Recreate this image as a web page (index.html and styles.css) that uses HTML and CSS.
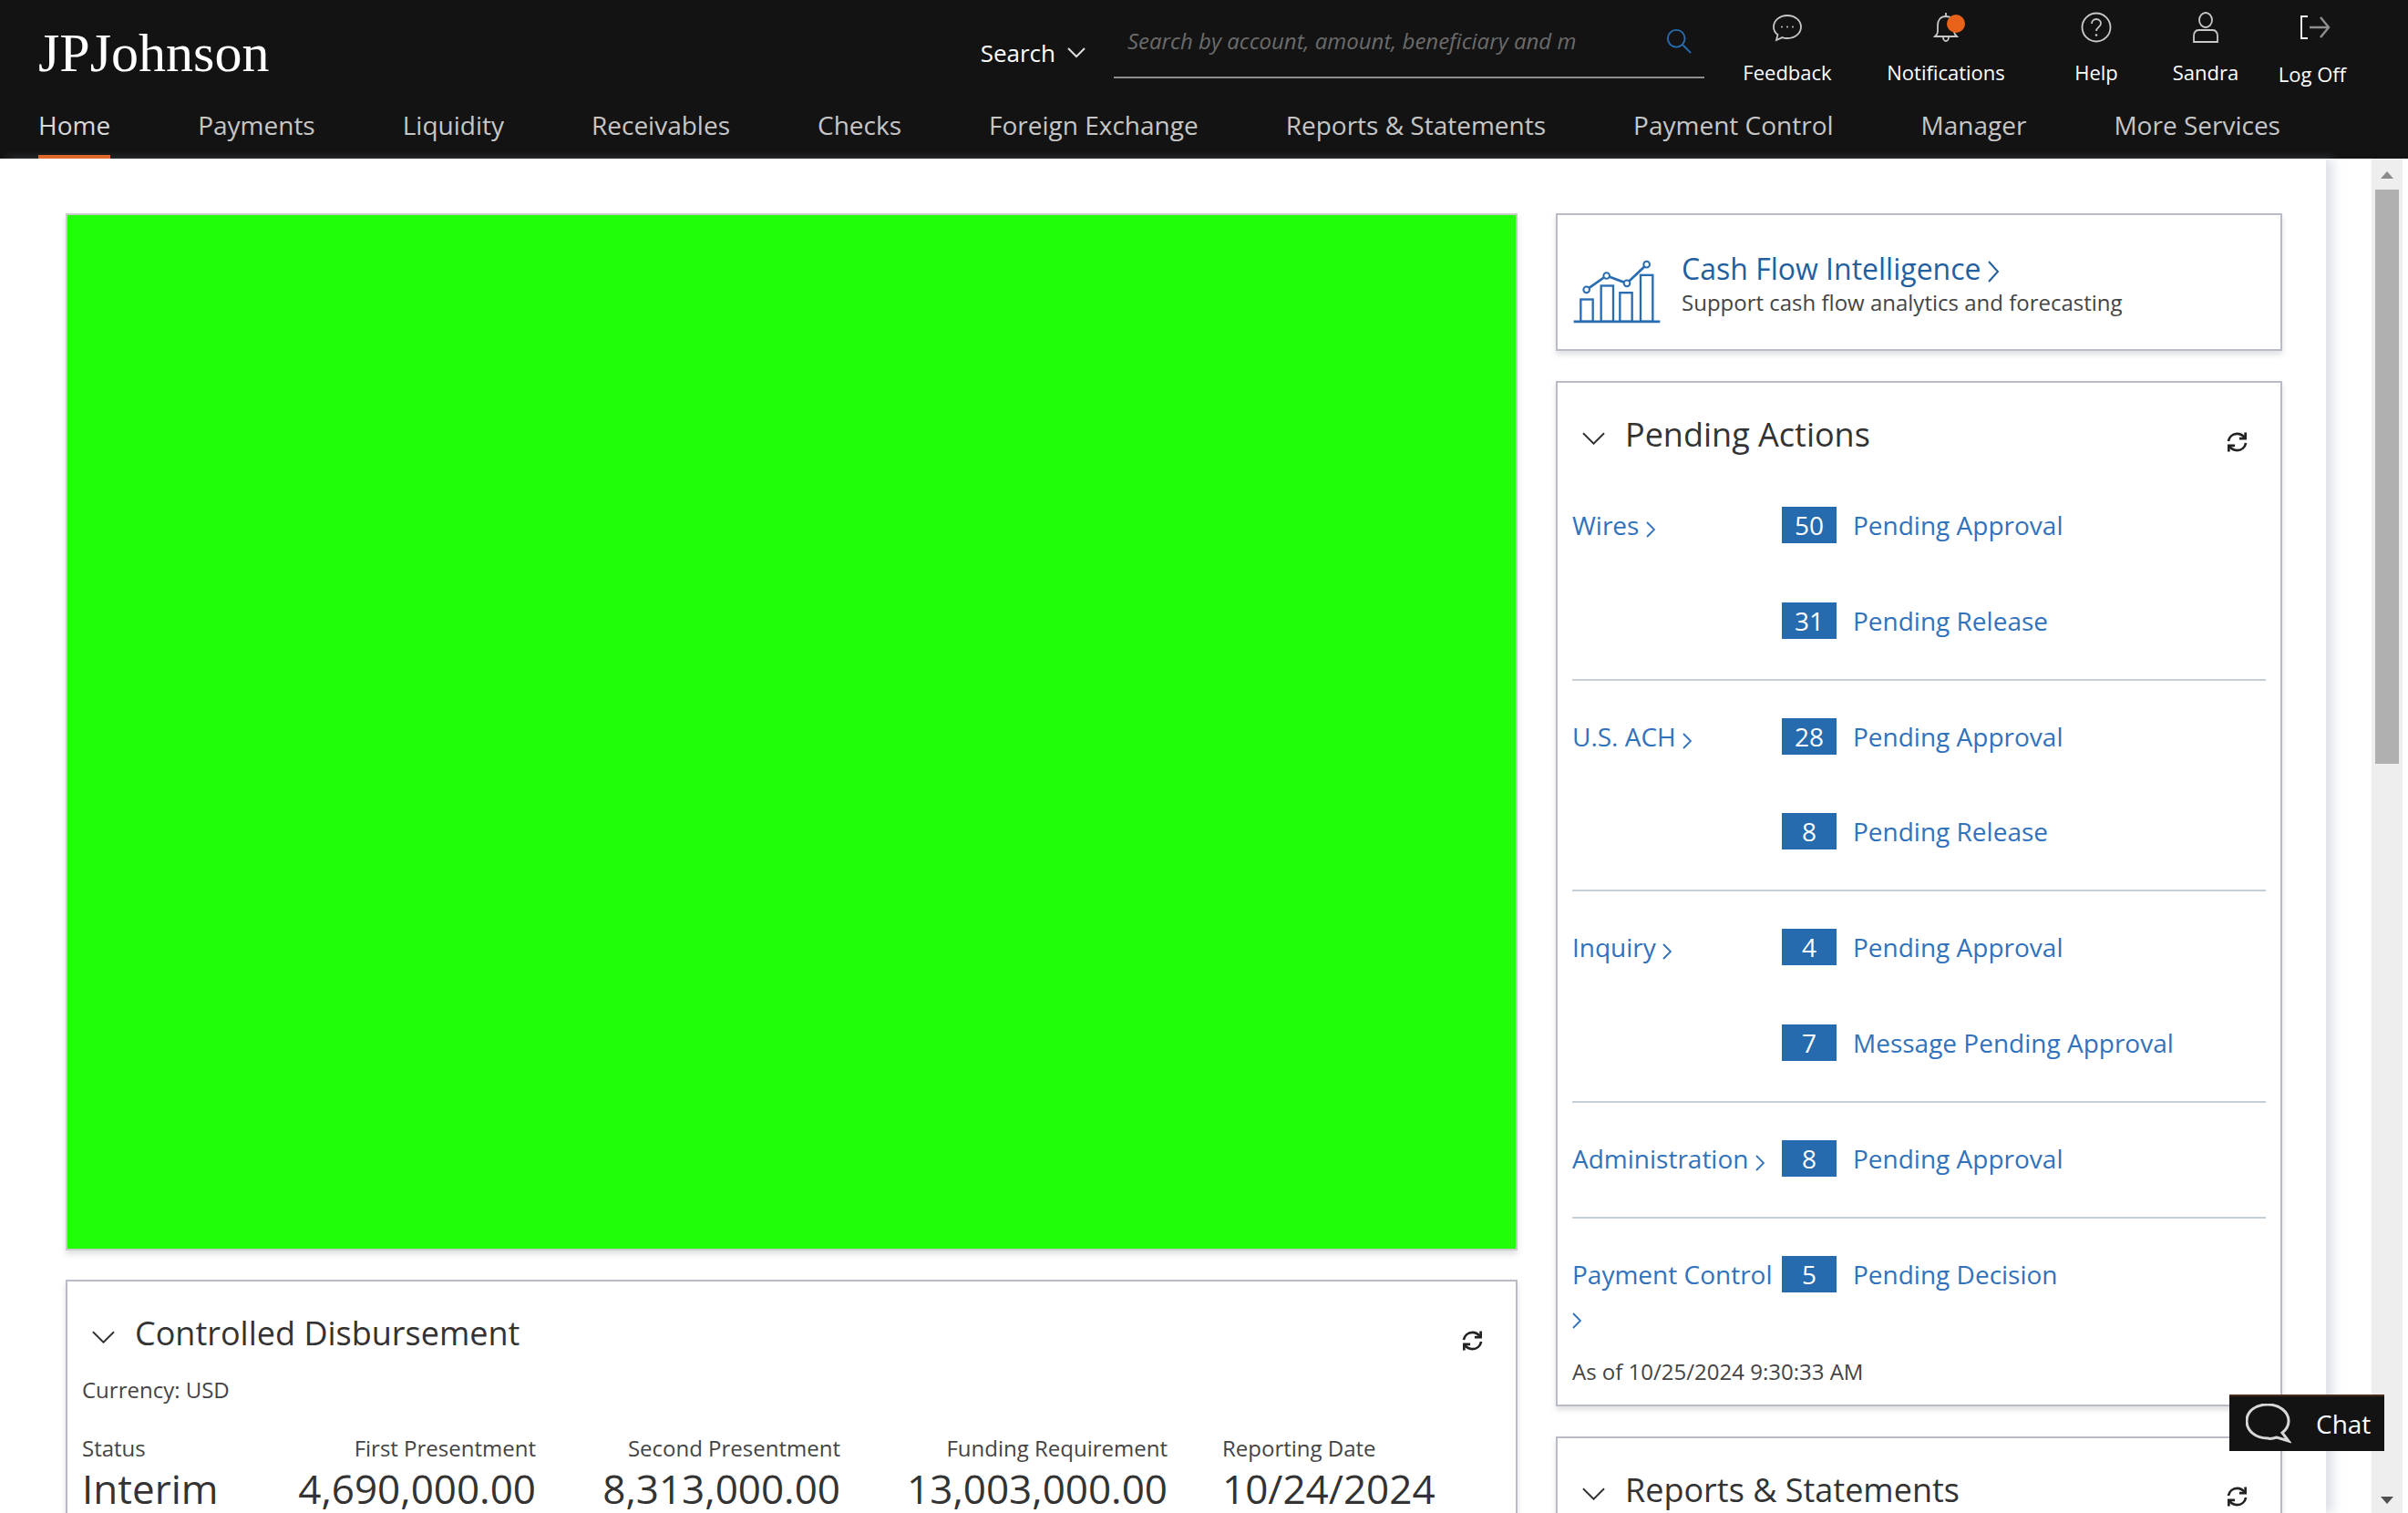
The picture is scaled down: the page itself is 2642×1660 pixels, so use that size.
FILE: index.html
```html
<!DOCTYPE html>
<html lang="en">
<head>
    <meta charset="UTF-8">
    <title>JPJohnson - Home</title>
    <link rel="stylesheet" href="styles.css">
</head>
<body>
    <header class="header">
        <div class="top-row">
            <div class="logo">JPJohnson</div>
            <div class="search-type">
                <span>Search</span>
                <svg class="chev-small" viewBox="0 0 20 12"><polyline points="1,1 10,10 19,1"/></svg>
            </div>
            <div class="search-box">
                <input class="search-input" type="text" placeholder="Search by account, amount, beneficiary and m">
                <svg class="search-icon" viewBox="0 0 32 32"><circle cx="13" cy="13" r="10"/><line x1="20" y1="20" x2="30" y2="30"/></svg>
            </div>
            <nav class="utils">
                <div class="util">
                    <svg class="util-icon" viewBox="0 0 36 36"><path d="M18 5c8.500 0 15 5.500 15 12.500S26.500 30 18 30c-2 0-4-.3-5.500-.9L6 32l1.500-6C4.500 24 3 21 3 17.500 3 10.500 9.500 5 18 5z"/><circle class="fill" cx="12" cy="17.500" r="1"/><circle class="fill" cx="18" cy="17.500" r="1"/><circle class="fill" cx="24" cy="17.500" r="1"/></svg>
                    <span>Feedback</span>
                </div>
                <div class="util">
                    <svg class="util-icon" viewBox="0 0 36 36"><path d="M18 6c-6 0-9 4-9 10v7c0 2-1.500 3.500-3 5h24c-1.500-1.500-3-3-3-5v-7c0-6-3-10-9-10z"/><path d="M15 29c0 2 1.300 4 3 4s3-2 3-4"/><line x1="18" y1="2" x2="18" y2="6"/><circle class="dot" cx="29" cy="14" r="10"/></svg>
                    <span>Notifications</span>
                </div>
                <div class="util">
                    <svg class="util-icon" viewBox="0 0 36 36"><circle cx="18" cy="18" r="15.500"/><path d="M13 14c0-3 2.200-5 5-5s5 2 5 4.800c0 4-5 4.200-5 8.200"/><circle class="fill" cx="18" cy="26.500" r="1.300"/></svg>
                    <span>Help</span>
                </div>
                <div class="util">
                    <svg class="util-icon" viewBox="0 0 36 36"><ellipse cx="18" cy="10" rx="7" ry="8"/><path d="M10 21h16c3 0 5 3 5 6v7H5v-7c0-3 2-6 5-6z"/></svg>
                    <span>Sandra</span>
                </div>
                <div class="util util-low">
                    <svg class="util-icon" viewBox="0 0 36 36"><polyline class="bracket" points="13,6 6,6 6,30 13,30"/><line class="arrow" x1="15" y1="18" x2="35" y2="18"/><polyline class="arrow" points="27,7 36,18 27,29"/></svg>
                    <span>Log Off</span>
                </div>
            </nav>
        </div>
        <nav class="main-nav">
            <a class="nav-link active">Home</a>
            <a class="nav-link">Payments</a>
            <a class="nav-link">Liquidity</a>
            <a class="nav-link">Receivables</a>
            <a class="nav-link">Checks</a>
            <a class="nav-link">Foreign Exchange</a>
            <a class="nav-link">Reports &amp; Statements</a>
            <a class="nav-link">Payment Control</a>
            <a class="nav-link">Manager</a>
            <a class="nav-link">More Services</a>
        </nav>
    </header>

    <div class="page">
        <main class="panel">
            <div class="col-left">
                <div class="card green-box"></div>
                <section class="card">
                    <div class="card-head">
                        <svg class="chev" viewBox="0 0 26 14"><polyline points="1,1 13,13 25,1"/></svg>
                        <h2 class="card-title">Controlled Disbursement</h2>
                        <svg class="refresh" viewBox="0 0 26 24"><path d="M3 11C4 6 8 2.500 13 2.500c3.500 0 6.500 1.700 8.500 4.500"/><polyline points="22.500,1 22.500,8 15.500,8"/><path d="M23 13c-1 5-5 8.500-10 8.500-3.500 0-6.500-1.700-8.500-4.500"/><polyline points="3.500,23 3.500,16 10.500,16"/></svg>
                    </div>
                    <div class="disb-body">
                        <div class="currency">Currency: USD</div>
                        <div class="disb-grid">
                            <div class="disb-cell">
                                <div class="disb-label">Status</div>
                                <div class="disb-value">Interim</div>
                            </div>
                            <div class="disb-cell right">
                                <div class="disb-label">First Presentment</div>
                                <div class="disb-value">4,690,000.00</div>
                            </div>
                            <div class="disb-cell right">
                                <div class="disb-label">Second Presentment</div>
                                <div class="disb-value">8,313,000.00</div>
                            </div>
                            <div class="disb-cell right">
                                <div class="disb-label">Funding Requirement</div>
                                <div class="disb-value">13,003,000.00</div>
                            </div>
                            <div class="disb-cell date">
                                <div class="disb-label">Reporting Date</div>
                                <div class="disb-value">10/24/2024</div>
                            </div>
                        </div>
                    </div>
                </section>
            </div>

            <div class="col-right">
                <div class="card cfi">
                    <svg class="cfi-icon" viewBox="78 195 288 215">
                        <g class="cfi-bars">
                            <rect x="103" y="325" width="40" height="73"/>
                            <rect x="170" y="280" width="40" height="118"/>
                            <rect x="232" y="303" width="40" height="95"/>
                            <rect x="300" y="245" width="40" height="153"/>
                        </g>
                        <line class="cfi-base" x1="80" y1="398" x2="364" y2="398"/>
                        <polyline class="cfi-line" points="122,293 188,247 255,272 320,210"/>
                        <circle class="cfi-dot" cx="122" cy="293" r="10"/>
                        <circle class="cfi-dot" cx="188" cy="247" r="10"/>
                        <circle class="cfi-dot" cx="255" cy="272" r="10"/>
                        <circle class="cfi-dot" cx="320" cy="210" r="10"/>
                    </svg>
                    <div>
                        <div class="cfi-title">Cash Flow Intelligence <svg class="cfi-arrow" viewBox="0 0 14 24"><polyline points="2,1 12,12 2,23"/></svg></div>
                        <div class="cfi-sub">Support cash flow analytics and forecasting</div>
                    </div>
                </div>

                <section class="card">
                    <div class="card-head">
                        <svg class="chev" viewBox="0 0 26 14"><polyline points="1,1 13,13 25,1"/></svg>
                        <h2 class="card-title">Pending Actions</h2>
                        <svg class="refresh" viewBox="0 0 26 24"><path d="M3 11C4 6 8 2.500 13 2.500c3.500 0 6.500 1.700 8.500 4.500"/><polyline points="22.500,1 22.500,8 15.500,8"/><path d="M23 13c-1 5-5 8.500-10 8.500-3.500 0-6.500-1.700-8.500-4.500"/><polyline points="3.500,23 3.500,16 10.500,16"/></svg>
                    </div>
                    <div class="group">
                        <a class="group-name">Wires <svg class="gt" viewBox="0 0 10 18"><polyline points="1,1 9,9 1,17"/></svg></a>
                        <div class="items">
                            <div class="item"><span class="badge">50</span><a>Pending Approval</a></div>
                            <div class="item"><span class="badge">31</span><a>Pending Release</a></div>
                        </div>
                    </div>
                    <div class="group">
                        <a class="group-name">U.S. ACH <svg class="gt" viewBox="0 0 10 18"><polyline points="1,1 9,9 1,17"/></svg></a>
                        <div class="items">
                            <div class="item"><span class="badge">28</span><a>Pending Approval</a></div>
                            <div class="item"><span class="badge">8</span><a>Pending Release</a></div>
                        </div>
                    </div>
                    <div class="group">
                        <a class="group-name">Inquiry <svg class="gt" viewBox="0 0 10 18"><polyline points="1,1 9,9 1,17"/></svg></a>
                        <div class="items">
                            <div class="item"><span class="badge">4</span><a>Pending Approval</a></div>
                            <div class="item"><span class="badge">7</span><a>Message Pending Approval</a></div>
                        </div>
                    </div>
                    <div class="group">
                        <a class="group-name">Administration <svg class="gt" viewBox="0 0 10 18"><polyline points="1,1 9,9 1,17"/></svg></a>
                        <div class="items">
                            <div class="item"><span class="badge">8</span><a>Pending Approval</a></div>
                        </div>
                    </div>
                    <div class="group last">
                        <a class="group-name">Payment Control <svg class="gt" viewBox="0 0 10 18"><polyline points="1,1 9,9 1,17"/></svg></a>
                        <div class="items">
                            <div class="item"><span class="badge">5</span><a>Pending Decision</a></div>
                        </div>
                    </div>
                    <div class="as-of">As of 10/25/2024 9:30:33 AM</div>
                </section>

                <section class="card">
                    <div class="card-head">
                        <svg class="chev" viewBox="0 0 26 14"><polyline points="1,1 13,13 25,1"/></svg>
                        <h2 class="card-title">Reports &amp; Statements</h2>
                        <svg class="refresh" viewBox="0 0 26 24"><path d="M3 11C4 6 8 2.500 13 2.500c3.500 0 6.500 1.700 8.500 4.500"/><polyline points="22.500,1 22.500,8 15.500,8"/><path d="M23 13c-1 5-5 8.500-10 8.500-3.500 0-6.500-1.700-8.500-4.500"/><polyline points="3.500,23 3.500,16 10.500,16"/></svg>
                    </div>
                </section>
            </div>
        </main>

        <div class="scrollbar">
            <span class="arrow-up"></span>
            <div class="thumb"></div>
            <span class="arrow-down"></span>
        </div>
    </div>

    <div class="chat">
        <svg class="chat-icon" viewBox="0 0 50 44"><path d="M24 1c13 0 23 8 23 18 0 6-3 10-7 13l7 9-13-4c-3 1-7 2-10 1C11 38 1 30 1 19S11 1 24 1z"/></svg>
        <span>Chat</span>
    </div>
</body>
</html>
```

FILE: styles.css
```css
* {
    box-sizing: border-box;
}
html, body {
    height: 100%;
}
body {
    margin: 0;
    font-family: "Open Sans", "Liberation Sans", sans-serif;
    background-color: #fff;
    color: #333;
    overflow: hidden;
    display: flex;
    flex-direction: column;
}

/* header */
.header {
    flex: 0 0 174px;
    background-color: #131313;
    padding-left: 42px;
}
.top-row {
    display: flex;
    height: 102px;
    padding-right: 47px;
}
.logo {
    font-family: "Liberation Serif", serif;
    font-size: 60px;
    line-height: 60px;
    color: #fff;
    margin-top: 28px;
    margin-right: auto;
}
.search-type {
    display: flex;
    align-items: center;
    gap: 13px;
    height: 40px;
    margin-top: 38px;
    margin-right: 31px;
    font-size: 26px;
    color: #fff;
}
.chev-small {
    width: 20px;
    height: 12px;
    fill: none;
    stroke: #ddd;
    stroke-width: 2;
}
.search-box {
    display: flex;
    align-items: center;
    justify-content: space-between;
    width: 648px;
    height: 74px;
    margin-top: 12px;
    padding: 0 13px 7px 15px;
    border-bottom: 2px solid #8d8d92;
}
.search-input {
    width: 495px;
    padding: 0;
    border: none;
    outline: none;
    background: transparent;
    font-family: inherit;
    font-size: 24px;
    font-style: italic;
    color: #ccc;
}
.search-input::placeholder {
    color: #6b6b6b;
    opacity: 1;
}
.search-icon {
    width: 30px;
    height: 30px;
    fill: none;
    stroke: #2a6cb0;
    stroke-width: 2;
}
.utils {
    display: grid;
    grid-template-columns: 140px 208px 122px 118px 116px;
    margin-left: 21px;
    padding-top: 12px;
}
.util {
    display: flex;
    flex-direction: column;
    align-items: center;
    gap: 16px;
    font-size: 22px;
    line-height: 30px;
    color: #fff;
    white-space: nowrap;
}
.util-low span {
    margin-top: 2px;
}
.util-icon {
    width: 36px;
    height: 36px;
    overflow: visible;
    fill: none;
    stroke: #c8c8c8;
    stroke-width: 1.800;
}
.util-icon .fill {
    fill: #c8c8c8;
    stroke: none;
}
.util-icon .dot {
    fill: #e8621a;
    stroke: none;
}
.util-icon .bracket {
    stroke: #fff;
}
.util-icon .arrow {
    stroke: #8e8e8e;
    stroke-width: 2.500;
}
.main-nav {
    display: flex;
    gap: 96px;
}
.nav-link {
    display: block;
    height: 72px;
    font-size: 28px;
    line-height: 71px;
    color: #c6c6c6;
    white-space: nowrap;
}
.nav-link.active {
    color: #d8d8d8;
    box-shadow: inset 0 -4px 0 #e8621a;
}

/* page */
.page {
    flex: 1;
    display: flex;
    min-height: 0;
}
.panel {
    flex: 0 0 2552px;
    display: flex;
    gap: 42px;
    padding: 60px 48px 0 72px;
    overflow: hidden;
    background-color: #fff;
    box-shadow: 8px 0 10px rgba(150, 160, 180, 0.3);
}
.col-left {
    flex: 0 0 1593px;
    display: flex;
    flex-direction: column;
    gap: 32px;
}
.col-right {
    flex: 0 0 797px;
    display: flex;
    flex-direction: column;
    gap: 33px;
}
.card {
    flex: none;
    border: 2px solid #b9bcc6;
    background-color: #fff;
    box-shadow: 0 4px 6px rgba(80, 85, 100, 0.18);
}
.green-box {
    height: 1138px;
    border-color: #c9c9c9;
    background-color: #1fff08;
}
.card-head {
    display: flex;
    align-items: center;
    height: 95px;
    padding: 32px 35px 13px 27px;
}
.chev {
    width: 25px;
    height: 14px;
    margin-top: 8px;
    margin-right: 22px;
    fill: none;
    stroke: #333;
    stroke-width: 2;
}
.card-title {
    margin: 0;
    margin-right: auto;
    font-size: 36px;
    font-weight: 400;
    line-height: 50px;
    color: #333;
}
.refresh {
    width: 25px;
    height: 24px;
    margin-top: 15px;
    fill: none;
    stroke: #222;
    stroke-width: 2.800;
}

/* controlled disbursement */
.disb-body {
    padding: 8px 16px 40px;
}
.currency {
    font-size: 24px;
    line-height: 32px;
    color: #444;
}
.disb-grid {
    display: grid;
    grid-template-columns: 200px 298px 334px 359px auto;
    margin-top: 32px;
}
.disb-cell.right {
    text-align: right;
}
.disb-cell.date {
    padding-left: 60px;
}
.disb-label {
    font-size: 24px;
    line-height: 32px;
    color: #444;
}
.disb-value {
    margin-top: 3px;
    font-size: 44px;
    line-height: 50px;
    color: #333;
}

/* cash flow card */
.cfi {
    display: flex;
    align-items: flex-start;
    gap: 23px;
    height: 151px;
    padding: 38px 0 0 17px;
}
.cfi-icon {
    width: 96px;
    height: 72px;
    margin-top: 11px;
    overflow: visible;
}
.cfi-bars {
    fill: #fff;
    stroke: #2a6cb0;
    stroke-width: 7;
}
.cfi-base {
    stroke: #2a6cb0;
    stroke-width: 8;
}
.cfi-line {
    fill: none;
    stroke: #2a6cb0;
    stroke-width: 8;
}
.cfi-dot {
    fill: #fff;
    stroke: #2a6cb0;
    stroke-width: 6;
}
.cfi-title {
    font-size: 32px;
    line-height: 42px;
    color: #235f9e;
}
.cfi-arrow {
    width: 14px;
    height: 24px;
    margin-left: -2px;
    vertical-align: -3px;
    fill: none;
    stroke: #235f9e;
    stroke-width: 2;
}
.cfi-sub {
    font-size: 24px;
    line-height: 32px;
    color: #444;
}

/* pending actions */
.group {
    display: grid;
    grid-template-columns: 230px 1fr;
    margin: 0 16px 0 16px;
    padding: 36px 0 39px;
    border-bottom: 2px solid #c5cfd8;
}
.group.last {
    padding-bottom: 22px;
    border-bottom: none;
}
.group-name {
    padding-top: 2px;
    font-size: 28px;
    line-height: 46px;
    color: #3172bb;
}
.gt {
    width: 10px;
    height: 18px;
    vertical-align: -3px;
    fill: none;
    stroke: #3172bb;
    stroke-width: 1.800;
}
.items {
    display: flex;
    flex-direction: column;
    gap: 54.500px;
}
.item {
    display: flex;
    align-items: center;
    gap: 18px;
    height: 50px;
    font-size: 28px;
    color: #3172bb;
}
.badge {
    flex: none;
    width: 60px;
    height: 40px;
    background-color: #256bad;
    color: #fff;
    font-size: 28px;
    line-height: 40px;
    text-align: center;
}
.as-of {
    padding: 0 16px 20px;
    font-size: 24px;
    line-height: 32px;
    color: #444;
}

/* scrollbar */
.scrollbar {
    flex: 0 0 34px;
    display: flex;
    flex-direction: column;
    align-items: center;
    margin-left: 50px;
    padding: 14px 0 10px;
    background-color: #eee;
}
.arrow-up {
    border-left: 7px solid transparent;
    border-right: 7px solid transparent;
    border-bottom: 8px solid #8a8a8a;
}
.arrow-down {
    margin-top: auto;
    border-left: 7px solid transparent;
    border-right: 7px solid transparent;
    border-top: 8px solid #505050;
}
.thumb {
    width: 26px;
    height: 630px;
    margin-top: 12px;
    background-color: #b0b0b0;
}

/* chat button sits over the page */
.chat {
    position: absolute;
    left: 2446px;
    top: 1530px;
    display: flex;
    align-items: center;
    gap: 27px;
    width: 170px;
    height: 62px;
    padding-left: 18px;
    border-top: 2px solid #4a2a1a;
    background-color: #131313;
    color: #fff;
    font-size: 28px;
}
.chat-icon {
    width: 50px;
    height: 44px;
    fill: none;
    stroke: #d8d8d8;
    stroke-width: 3;
}
```
